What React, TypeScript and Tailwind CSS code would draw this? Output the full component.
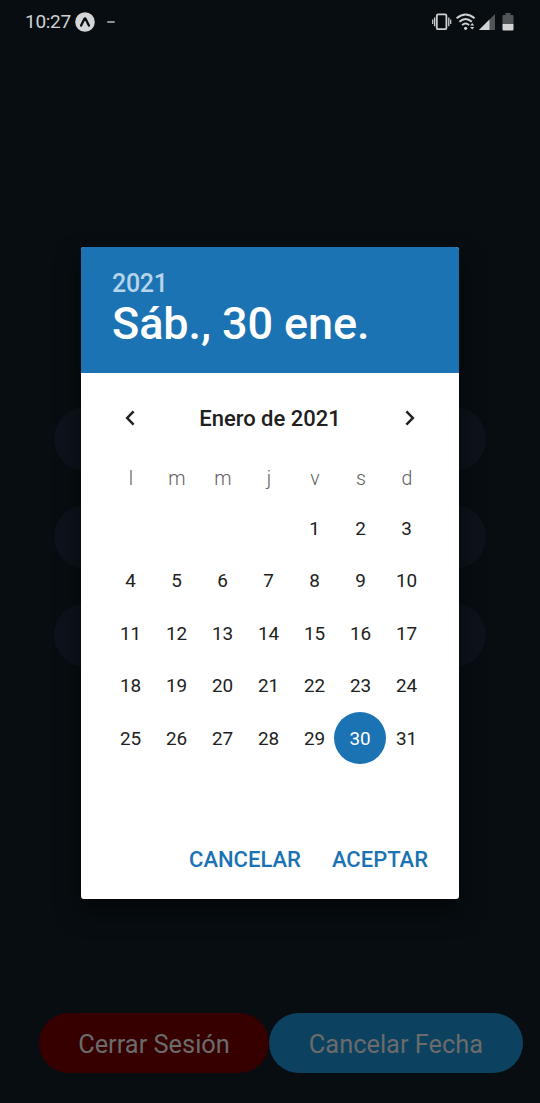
import React from "react";

const weekdays = ["l", "m", "m", "j", "v", "s", "d"];
const cells: (number | null)[] = [
  null, null, null, null,
  ...Array.from({ length: 31 }, (_, i) => i + 1),
];
const SELECTED = 30;

function ExpoIcon() {
  return (
    <svg width="20" height="20" viewBox="0 0 20 20">
      <circle cx="10" cy="10" r="9.8" fill="#d3d5d6" />
      <path d="M6.1 13.6 9.3 7.1Q10 5.9 10.7 7.1L13.9 13.6" fill="none" stroke="#070d11" strokeWidth="2.3" strokeLinecap="round" />
    </svg>
  );
}

function VibrateIcon() {
  return (
    <svg width="20" height="18" viewBox="0 0 20 18" fill="none" stroke="#cfd1d2">
      <rect x="4.8" y="1.4" width="9.6" height="14.8" rx="1.3" strokeWidth="1.8" />
      <path d="M2.6 4.4v8.8M16.8 4.4v8.8" strokeWidth="1.3" />
      <path d="M.7 6.5v4.4M18.7 6.5v4.4" strokeWidth="1.2" />
    </svg>
  );
}

function WifiIcon() {
  return (
    <svg width="20" height="18" viewBox="0 0 20 18">
      <g fill="none" stroke="#cfd1d2" strokeWidth="1.9">
        <path d="M.6 5.2Q9.6-2.4 18.6 5.2" />
        <path d="M3.4 8.7Q9.6 3.1 15.8 8.7" />
        <path d="M6.1 12.1Q9.6 8.7 13.1 12.1" />
      </g>
      <circle cx="9.6" cy="15.3" r="1.6" fill="#cfd1d2" />
      <path d="m16.2 10.1 2.1 2.4h-4.2zM14.1 14.1h4.2l-2.1 2.4z" fill="#cfd1d2" />
    </svg>
  );
}

function SignalIcon() {
  return (
    <svg width="16" height="16" viewBox="0 0 16 16">
      <path d="M16 0v16H0z" fill="#515557" />
      <path d="M10.5 5.5V16H0z" fill="#d2d4d5" />
    </svg>
  );
}

function BatteryIcon() {
  return (
    <svg width="12" height="18" viewBox="0 0 12 18">
      <path d="M3.5 0h5v2h2q1 0 1 1v8H.5V3q0-1 1-1h2z" fill="#515557" />
      <path d="M.5 11h11v5.5q0 1-1 1h-9q-1 0-1-1z" fill="#d2d4d5" />
    </svg>
  );
}

function Chevron({ direction }: { direction: "left" | "right" }) {
  return (
    <svg width="16" height="20" viewBox="0 0 16 20" fill="none" stroke="#202020" strokeWidth="2.5">
      <path d={direction === "left" ? "M11.6 3.4 5.2 10l6.4 6.6" : "M4.4 3.4 10.8 10l-6.4 6.6"} />
    </svg>
  );
}

function StatusBar() {
  return (
    <header className="flex h-[43px] items-center pl-[25px] pr-[26px]">
      <span className="text-[19px] leading-[22px] tracking-[-0.3px] text-[#cfd1d2]">10:27</span>
      <span className="ml-[4px]"><ExpoIcon /></span>
      <span className="ml-[12px] h-[2px] w-[8px] rounded-full bg-[#8e9192]" />
      <div className="ml-auto flex items-center">
        <VibrateIcon />
        <span className="ml-[4px]"><WifiIcon /></span>
        <span className="ml-[3px]"><SignalIcon /></span>
        <span className="ml-[7px]"><BatteryIcon /></span>
      </div>
    </header>
  );
}

function DatePickerDialog() {
  return (
    <section role="dialog" className="absolute left-[81px] top-[247px] flex h-[652px] w-[378px] flex-col overflow-hidden rounded-[3px] bg-white shadow-[0_12px_24px_rgba(0,0,0,0.5)]">
      <div className="flex h-[126px] flex-col bg-[#1b73b4] pl-[31px] pt-[22px] font-medium">
        <span className="text-[25px] leading-[30px] tracking-[-0.3px] text-[#b7d4e9]">2021</span>
        <span className="text-[45px] leading-[50px] tracking-[-0.1px] text-white">Sáb., 30 ene.</span>
      </div>
      <div className="flex h-[90px] items-center justify-between px-[41px]">
        <button aria-label="Mes anterior"><Chevron direction="left" /></button>
        <span className="text-[22px] font-medium text-[#202020]">Enero de 2021</span>
        <button aria-label="Mes siguiente"><Chevron direction="right" /></button>
      </div>
      <div className="grid grid-cols-[repeat(7,46px)] pl-[27px] text-center text-[19.5px] font-light leading-[32px] text-[#606060]">
        {weekdays.map((day, i) => <span key={i}>{day}</span>)}
      </div>
      <div className="mt-[7px] grid auto-rows-[52.5px] grid-cols-[repeat(7,46px)] px-[26px] text-[18.9px] tracking-[-0.1px] text-[#212121]">
        {cells.map((day, i) => (
          <div key={i} className="flex items-center justify-center">
            {day === SELECTED ? (
              <span className="flex size-[52px] shrink-0 items-center justify-center rounded-full bg-[#1b73b4] pt-px text-white">{day}</span>
            ) : <span className="pl-px pt-px">{day}</span>}
          </div>
        ))}
      </div>
      <div className="mt-auto flex h-[78px] justify-end gap-[31px] pr-[31px] text-[22px] font-medium text-[#1b73b4]">
        <button className="h-[76px]">CANCELAR</button>
        <button className="h-[76px]">ACEPTAR</button>
      </div>
    </section>
  );
}

export default function App() {
  return (
    <div className="relative flex h-[1103px] w-[540px] flex-col overflow-hidden bg-[#070d11] font-['Roboto',sans-serif]">
      <StatusBar />
      <div className="mt-[364px] flex flex-col gap-[34px] pl-[54px]">
        <div className="h-[64px] w-[432px] rounded-full bg-[#0c131b]" />
        <div className="h-[64px] w-[432px] rounded-full bg-[#0c131b]" />
        <div className="h-[64px] w-[432px] rounded-full bg-[#0c131b]" />
      </div>
      <div className="mb-[30px] mt-auto flex pl-[39px] text-[25.4px] text-[#6b6b6b]">
        <button className="h-[60px] w-[230px] rounded-full bg-[#360000] pt-[3px]">Cerrar Sesión</button>
        <button className="h-[60px] w-[254px] rounded-full bg-[#0c4160] pt-[3px]">Cancelar Fecha</button>
      </div>
      <DatePickerDialog />
    </div>
  );
}
